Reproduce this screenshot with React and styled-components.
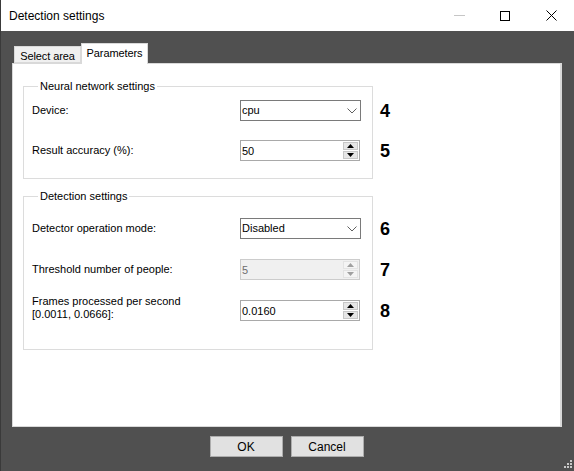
import React from "react";
import styled, { createGlobalStyle } from "styled-components";

const Global = createGlobalStyle`
  html, body {
    margin: 0;
    padding: 0;
    background: #4f4f4f;
  }
  * {
    box-sizing: border-box;
  }
`;

const Window = styled.div`
  width: 574px;
  height: 471px;
  display: flex;
  flex-direction: column;
  background: #505050;
  font-family: "Liberation Sans", Arial, sans-serif;
  font-size: 11px;
  color: #000;
  border-left: 1px solid #3a3a3a;
  position: relative;
  overflow: hidden;
`;

const TitleBar = styled.div`
  height: 31px;
  flex: none;
  background: #fff;
  display: flex;
  align-items: center;
  padding-left: 8px;
`;

const Title = styled.div`
  flex: 1;
  font-size: 12px;
  color: #000;
`;

const Controls = styled.div`
  display: flex;
  height: 100%;
`;

const CtrlButton = styled.div`
  width: 46px;
  height: 100%;
  display: flex;
  align-items: center;
  justify-content: center;
`;

const Body = styled.div`
  flex: 1;
  display: flex;
  flex-direction: column;
  padding: 12px 12px 0 11px;
`;

const TabStrip = styled.div`
  display: flex;
  align-items: flex-end;
  height: 20px;
  padding-left: 2px;
  position: relative;
  z-index: 1;
`;

const Tab = styled.div`
  width: 67px;
  height: ${(p) => (p.$active ? "21px" : "17px")};
  margin-bottom: ${(p) => (p.$active ? "-1px" : "0")};
  padding-top: 3px;
  text-align: center;
  background: ${(p) => (p.$active ? "#fff" : "#f0f0f0")};
  border: 1px solid #d9d9d9;
  border-bottom: ${(p) => (p.$active ? "none" : "1px solid #d9d9d9")};
  font-size: 11px;
  line-height: 13px;
  letter-spacing: -0.1px;
  white-space: nowrap;
`;

const Panel = styled.div`
  height: 364px;
  background: #fff;
  border: 1px solid #d9d9d9;
  border-right: 2px solid #d9d9d9;
  padding: 16px 0 0 10px;
  display: flex;
  flex-direction: column;
  align-items: flex-start;
`;

const Group = styled.fieldset`
  width: 350px;
  margin: 0 0 ${(p) => p.$mb || 0}px 0;
  padding: ${(p) => p.$pt}px 0 ${(p) => p.$pb}px 8px;
  border: 1px solid #dcdcdc;
  display: flex;
  flex-direction: column;
  gap: ${(p) => p.$gap}px;
  min-width: 0;
`;

const Legend = styled.legend`
  margin-left: 6px;
  padding: 0 2px;
  font-size: 11px;
  line-height: 13px;
`;

const Row = styled.div`
  height: 21px;
  display: flex;
  align-items: center;
  position: relative;
`;

const Label = styled.div`
  width: 208px;
  line-height: 13px;
  margin-top: ${(p) => p.$shift || 0}px;
`;

const Callout = styled.span`
  position: absolute;
  left: 348px;
  top: 50%;
  transform: translateY(-50%);
  font-size: 18px;
  font-weight: bold;
  line-height: 18px;
`;

const Combo = styled.div`
  width: 121px;
  height: 21px;
  border: 1px solid #7a7a7a;
  background: #fff;
  display: flex;
  align-items: center;
  padding-left: 1px;
`;

const ComboText = styled.div`
  flex: 1;
  line-height: 13px;
`;

const ComboArrow = styled.div`
  width: 17px;
  display: flex;
  align-items: center;
  justify-content: center;
`;

const Spin = styled.div`
  width: 120px;
  height: 21px;
  border: 1px solid ${(p) => (p.$disabled ? "#cccccc" : "#a9a9a9")};
  background: ${(p) => (p.$disabled ? "#f0f0f0" : "#fff")};
  display: flex;
  align-items: stretch;
  padding: 1px;
`;

const SpinText = styled.div`
  flex: 1;
  display: flex;
  align-items: center;
  color: ${(p) => (p.$disabled ? "#6d6d6d" : "#000")};
`;

const SpinButtons = styled.div`
  width: 15px;
  display: flex;
  flex-direction: column;
  gap: 1px;
`;

const SpinHalf = styled.div`
  flex: 1;
  background: ${(p) => (p.$disabled ? "#f4f4f4" : "#e6e6e6")};
  border: 1px solid ${(p) => (p.$disabled ? "#e3e3e3" : "#c7c7c7")};
  display: flex;
  align-items: center;
  justify-content: center;
`;

const ButtonRow = styled.div`
  display: flex;
  justify-content: center;
  gap: 8px;
  margin-top: 9px;
  padding-right: 1px;
`;

const Button = styled.div`
  width: 73px;
  height: 21px;
  background: #e1e1e1;
  border: 1px solid #adadad;
  display: flex;
  align-items: center;
  justify-content: center;
  font-size: 12px;
`;

const Grip = styled.div`
  position: absolute;
  right: 2px;
  bottom: 3px;
  display: grid;
  grid-template-columns: repeat(3, 2px);
  grid-template-rows: repeat(3, 2px);
  gap: 1px;
  span {
    background: #c8c8c8;
  }
  span.off {
    visibility: hidden;
  }
`;

const Arrow = ({ up, disabled }) => (
  <svg width="7" height="4" viewBox="0 0 7 4">
    <path
      d={up ? "M0 4 L3.5 0 L7 4 Z" : "M0 0 L3.5 4 L7 0 Z"}
      fill={disabled ? "#a0a0a0" : "#000"}
    />
  </svg>
);

const Chevron = () => (
  <svg width="10" height="6" viewBox="0 0 10 6">
    <path d="M0.5 0.5 L5 5 L9.5 0.5" fill="none" stroke="#606060" strokeWidth="1" />
  </svg>
);

const SpinBox = ({ value, disabled }) => (
  <Spin $disabled={disabled}>
    <SpinText $disabled={disabled}>{value}</SpinText>
    <SpinButtons>
      <SpinHalf $disabled={disabled}>
        <Arrow up disabled={disabled} />
      </SpinHalf>
      <SpinHalf $disabled={disabled}>
        <Arrow disabled={disabled} />
      </SpinHalf>
    </SpinButtons>
  </Spin>
);

const ComboBox = ({ value }) => (
  <Combo>
    <ComboText>{value}</ComboText>
    <ComboArrow>
      <Chevron />
    </ComboArrow>
  </Combo>
);

export default function App() {
  return (
    <>
      <Global />
      <Window>
        <TitleBar>
          <Title>Detection settings</Title>
          <Controls>
            <CtrlButton>
              <svg width="11" height="1" viewBox="0 0 11 1">
                <rect width="11" height="1" fill="#c6c6c6" />
              </svg>
            </CtrlButton>
            <CtrlButton>
              <svg width="10" height="10" viewBox="0 0 10 10">
                <rect x="0.5" y="0.5" width="9" height="9" fill="none" stroke="#000" />
              </svg>
            </CtrlButton>
            <CtrlButton>
              <svg width="11" height="11" viewBox="0 0 11 11">
                <path d="M0.5 0.5 L10.5 10.5 M10.5 0.5 L0.5 10.5" stroke="#000" strokeWidth="1" />
              </svg>
            </CtrlButton>
          </Controls>
        </TitleBar>
        <Body>
          <TabStrip>
            <Tab>Select area</Tab>
            <Tab $active>Parameters</Tab>
          </TabStrip>
          <Panel>
            <Group $pt={7} $pb={17} $gap={19} $mb={11}>
              <Legend>Neural network settings</Legend>
              <Row>
                <Label>Device:</Label>
                <ComboBox value="cpu" />
                <Callout>4</Callout>
              </Row>
              <Row>
                <Label>Result accuracy (%):</Label>
                <SpinBox value="50" />
                <Callout>5</Callout>
              </Row>
            </Group>
            <Group $pt={15} $pb={28} $gap={20}>
              <Legend>Detection settings</Legend>
              <Row>
                <Label>Detector operation mode:</Label>
                <ComboBox value="Disabled" />
                <Callout>6</Callout>
              </Row>
              <Row>
                <Label>Threshold number of people:</Label>
                <SpinBox value="5" disabled />
                <Callout>7</Callout>
              </Row>
              <Row>
                <Label $shift={-5}>
                  Frames processed per second
                  <br />
                  [0.0011, 0.0666]:
                </Label>
                <SpinBox value="0.0160" />
                <Callout>8</Callout>
              </Row>
            </Group>
          </Panel>
          <ButtonRow>
            <Button>OK</Button>
            <Button>Cancel</Button>
          </ButtonRow>
        </Body>
        <Grip>
          {Array.from({ length: 9 }).map((_, i) => (
            <span key={i} className={[0, 1, 3].includes(i) ? "off" : ""} />
          ))}
        </Grip>
      </Window>
    </>
  );
}
